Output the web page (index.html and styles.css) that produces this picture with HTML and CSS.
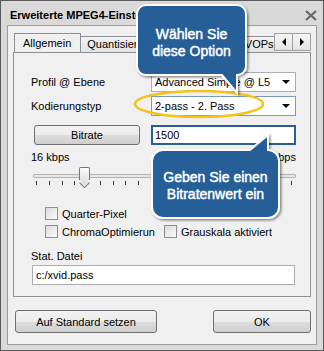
FILE: index.html
```html
<!DOCTYPE html>
<html lang="de">
<head>
  <meta charset="utf-8">
  <title>Erweiterte MPEG4-Einstellungen</title>
  <link rel="stylesheet" href="styles.css">
</head>
<body>
  <div class="window">
    <div class="titlebar">
      <span class="title">Erweiterte MPEG4-Einstellungen</span>
      <svg class="close" width="12" height="11" viewBox="0 0 12 11">
        <path d="M1 1 L11 10 M11 1 L1 10" stroke="#666" stroke-width="2.2" fill="none"/>
      </svg>
    </div>

    <div class="client">
      <div class="tabs">
        <div class="tabstrip">
          <div class="tab active">Allgemein</div>
          <div class="tab">Quantisierung</div>
          <div class="tab">Bewegung</div>
          <div class="tab last">B-VOPs</div>
        </div>
        <div class="tab-scroll">
          <span class="scroll-btn"><span class="tri-left"></span></span>
          <span class="scroll-btn"><span class="tri-right"></span></span>
        </div>
      </div>

      <div class="panel">
        <div class="form">
          <label>Profil @ Ebene</label>
          <div class="select">Advanced Simple @ L5</div>
          <label>Kodierungstyp</label>
          <div class="select focused">2-pass - 2. Pass</div>
          <button class="btn bitrate-btn">Bitrate</button>
          <div class="input active">1500</div>
        </div>

        <div class="range-labels">
          <span>16 kbps</span>
          <span>10000 kbps</span>
        </div>
        <div class="slider">
          <div class="track"></div>
          <div class="thumb"></div>
          <div class="ticks">
            <i></i><i></i><i></i><i></i><i></i><i></i><i></i>
            <i></i><i></i><i></i><i></i><i></i><i></i><i></i>
            <i></i><i></i><i></i><i></i><i></i><i></i><i></i>
          </div>
        </div>

        <div class="checks">
          <div class="check"><span class="box"></span><span class="check-label">Quarter-Pixel</span></div>
          <div></div>
          <div class="check"><span class="box"></span><span class="check-label">ChromaOptimierung</span></div>
          <div class="check"><span class="box"></span><span class="check-label">Grauskala aktiviert</span></div>
        </div>

        <div class="field-label">Stat. Datei</div>
        <div class="input file">c:/xvid.pass</div>
      </div>

      <div class="buttons">
        <button class="btn reset-btn">Auf Standard setzen</button>
        <button class="btn ok-btn">OK</button>
      </div>
    </div>
  </div>

  <svg class="marks" width="324" height="351" viewBox="0 0 324 351">
    <defs>
      <filter id="shadow" x="-20%" y="-20%" width="140%" height="140%">
        <feDropShadow dx="1.5" dy="1.5" stdDeviation="1.2" flood-color="#000" flood-opacity="0.45"/>
      </filter>
    </defs>
    <ellipse cx="199" cy="104" rx="64" ry="13" fill="none" stroke="#f3c21b" stroke-width="2.6"/>
    <path class="bubble" filter="url(#shadow)"
      d="M146 5 H237 A9 9 0 0 1 246 14 V66 A9 9 0 0 1 237 75 V93 L222 75 H146 A9 9 0 0 1 137 66 V14 A9 9 0 0 1 146 5 Z"/>
    <path class="bubble" filter="url(#shadow)"
      d="M163 150 H250 L268 135 V150 A11 11 0 0 1 279 161 V207 A11 11 0 0 1 268 218 H163 A11 11 0 0 1 152 207 V161 A11 11 0 0 1 163 150 Z"/>
  </svg>

  <div class="callout-text tip-top">Wählen Sie<br>diese Option</div>
  <div class="callout-text tip-bottom">Geben Sie einen<br>Bitratenwert ein</div>
</body>
</html>
```

FILE: styles.css
```css
* {
  box-sizing: border-box;
}

body {
  margin: 0;
  width: 324px;
  height: 351px;
  position: relative;
  overflow: hidden;
  font-family: "Liberation Sans", Arial, sans-serif;
  font-size: 11px;
  color: #000;
  background: #fff;
}

.window {
  height: 351px;
  display: flex;
  flex-direction: column;
  border: 1px solid #5a5a5a;
  background: #d9d9d9;
  padding: 0 6px 5px;
}

.titlebar {
  height: 24px;
  display: flex;
  align-items: center;
  justify-content: space-between;
  padding: 4px 0 0 3px;
}

.title {
  font-weight: bold;
  font-size: 11px;
  color: #000;
  white-space: nowrap;
}

.client {
  flex: 1;
  display: flex;
  flex-direction: column;
  border: 1px solid #9c9c9c;
  background: #f0f0f0;
  padding: 7px 5px 0;
}

/* tabs */
.tabs {
  display: flex;
  height: 19px;
  padding-left: 1px;
}

.tabstrip {
  flex: 1;
  display: flex;
  align-items: flex-end;
  overflow: hidden;
}

.tab {
  height: 16px;
  line-height: 15px;
  padding: 0 6px;
  margin-right: -1px;
  border: 1px solid #8e9096;
  border-bottom: none;
  background: linear-gradient(#f3f3f3, #e1e1e1);
  white-space: nowrap;
}

.tab.active {
  position: relative;
  z-index: 1;
  height: 20px;
  line-height: 19px;
  margin-bottom: -1px;
  padding: 0 9px 0 8px;
  background: #f0f0f0;
}

.tab.last {
  flex: 1;
  text-align: right;
  padding-right: 4px;
}

.tab-scroll {
  display: flex;
  height: 18px;
}

.scroll-btn {
  width: 19px;
  display: flex;
  align-items: center;
  justify-content: center;
  border: 1px solid #a0a0a0;
  margin-left: -1px;
  background: linear-gradient(#f6f6f6, #e3e3e3);
}

.scroll-btn:first-child {
  margin-left: 0;
}

.tri-left {
  border-top: 4px solid transparent;
  border-bottom: 4px solid transparent;
  border-right: 4px solid #000;
}

.tri-right {
  border-top: 4px solid transparent;
  border-bottom: 4px solid transparent;
  border-left: 4px solid #000;
}

.panel {
  border: 1px solid #8e9096;
  background: #f0f0f0;
  padding: 19px 16px 11px 17px;
}

/* form rows */
.form {
  display: grid;
  grid-template-columns: 120px 145px;
  grid-template-rows: 20px 20px 20px;
  row-gap: 4px;
  align-items: center;
}

.select {
  position: relative;
  height: 20px;
  line-height: 18px;
  padding-left: 3px;
  border: 1px solid #abadb3;
  background: #fff;
  white-space: nowrap;
  overflow: hidden;
}

.select::after {
  content: "";
  position: absolute;
  right: 5px;
  top: 7px;
  border-left: 4px solid transparent;
  border-right: 4px solid transparent;
  border-top: 4px solid #000;
}

.select.focused {
  border-color: #7a9ac4;
}

.btn {
  font-family: inherit;
  font-size: 11px;
  color: #000;
  border: 1px solid #707070;
  border-radius: 3px;
  background: linear-gradient(#f2f2f2 0%, #ebebeb 50%, #dddddd 51%, #cfcfcf 100%);
  padding: 0;
}

.bitrate-btn {
  height: 20px;
  width: 106px;
  margin: 5px 0 0 3px;
  align-self: start;
}

.input {
  height: 20px;
  line-height: 18px;
  padding-left: 3px;
  border: 1px solid #abadb3;
  background: #fff;
}

.input.active {
  margin-top: 5px;
  align-self: start;
  border: 2px solid #2c5d94;
  line-height: 16px;
  padding-left: 2px;
}

/* slider */
.range-labels {
  display: flex;
  justify-content: space-between;
  margin: 10px -2px 0 0;
  line-height: 14px;
}

.slider {
  position: relative;
  height: 20px;
  margin: 2px -2px 0 2px;
  padding-top: 8px;
}

.track {
  height: 4px;
  border: 1px solid #b4b4b4;
  border-radius: 1px;
  background: #e6e6e6;
}

.thumb {
  position: absolute;
  left: 46px;
  top: 1px;
  width: 11px;
  height: 13px;
  border: 1px solid #777;
  border-bottom: none;
  border-radius: 2px 2px 0 0;
  background: linear-gradient(#fdfdfd, #e2e2e2);
}

.thumb::after {
  content: "";
  position: absolute;
  left: 0;
  top: 11px;
  width: 7px;
  height: 7px;
  border-right: 1px solid #777;
  border-bottom: 1px solid #777;
  background: #e2e2e2;
  transform: translateX(0.5px) rotate(45deg) scale(0.95, 0.95);
  transform-origin: 50% 50%;
}

.ticks {
  display: flex;
  justify-content: space-between;
  padding: 0 4px 0 3px;
  margin-top: 3px;
}

.ticks i {
  display: block;
  width: 1px;
  height: 4px;
  background: #3a3a3a;
}

/* check boxes */
.checks {
  display: grid;
  grid-template-columns: 110px auto;
  column-gap: 9px;
  row-gap: 5px;
  margin: 21px 0 0 14px;
}

.check {
  display: flex;
  align-items: center;
  gap: 4px;
  height: 13px;
  overflow: hidden;
  white-space: nowrap;
}

.box {
  flex: none;
  width: 13px;
  height: 13px;
  border: 1px solid #8f8f8f;
  background: linear-gradient(135deg, #dcdcdc, #fbfbfb);
}

.check-label {
  overflow: hidden;
}

.field-label {
  margin-top: 11px;
  line-height: 14px;
}

.input.file {
  margin: 2px -1px 0 1px;
}

/* bottom buttons */
.buttons {
  display: flex;
  justify-content: space-between;
  margin-top: 13px;
  padding-left: 2px;
}

.reset-btn {
  width: 142px;
  height: 23px;
}

.ok-btn {
  width: 98px;
  height: 23px;
}

/* callouts */
.marks {
  position: absolute;
  left: 0;
  top: 0;
  pointer-events: none;
}

.bubble {
  fill: #285e98;
  stroke: #fff;
  stroke-width: 2;
}

.callout-text {
  position: absolute;
  display: flex;
  align-items: center;
  justify-content: center;
  text-align: center;
  color: #fff;
  font-size: 14px;
  line-height: 17px;
  -webkit-text-stroke: 0.45px #fff;
}

.tip-top {
  left: 137px;
  top: 8px;
  width: 109px;
  height: 70px;
}

.tip-bottom {
  left: 152px;
  top: 152px;
  width: 127px;
  height: 68px;
}
```
